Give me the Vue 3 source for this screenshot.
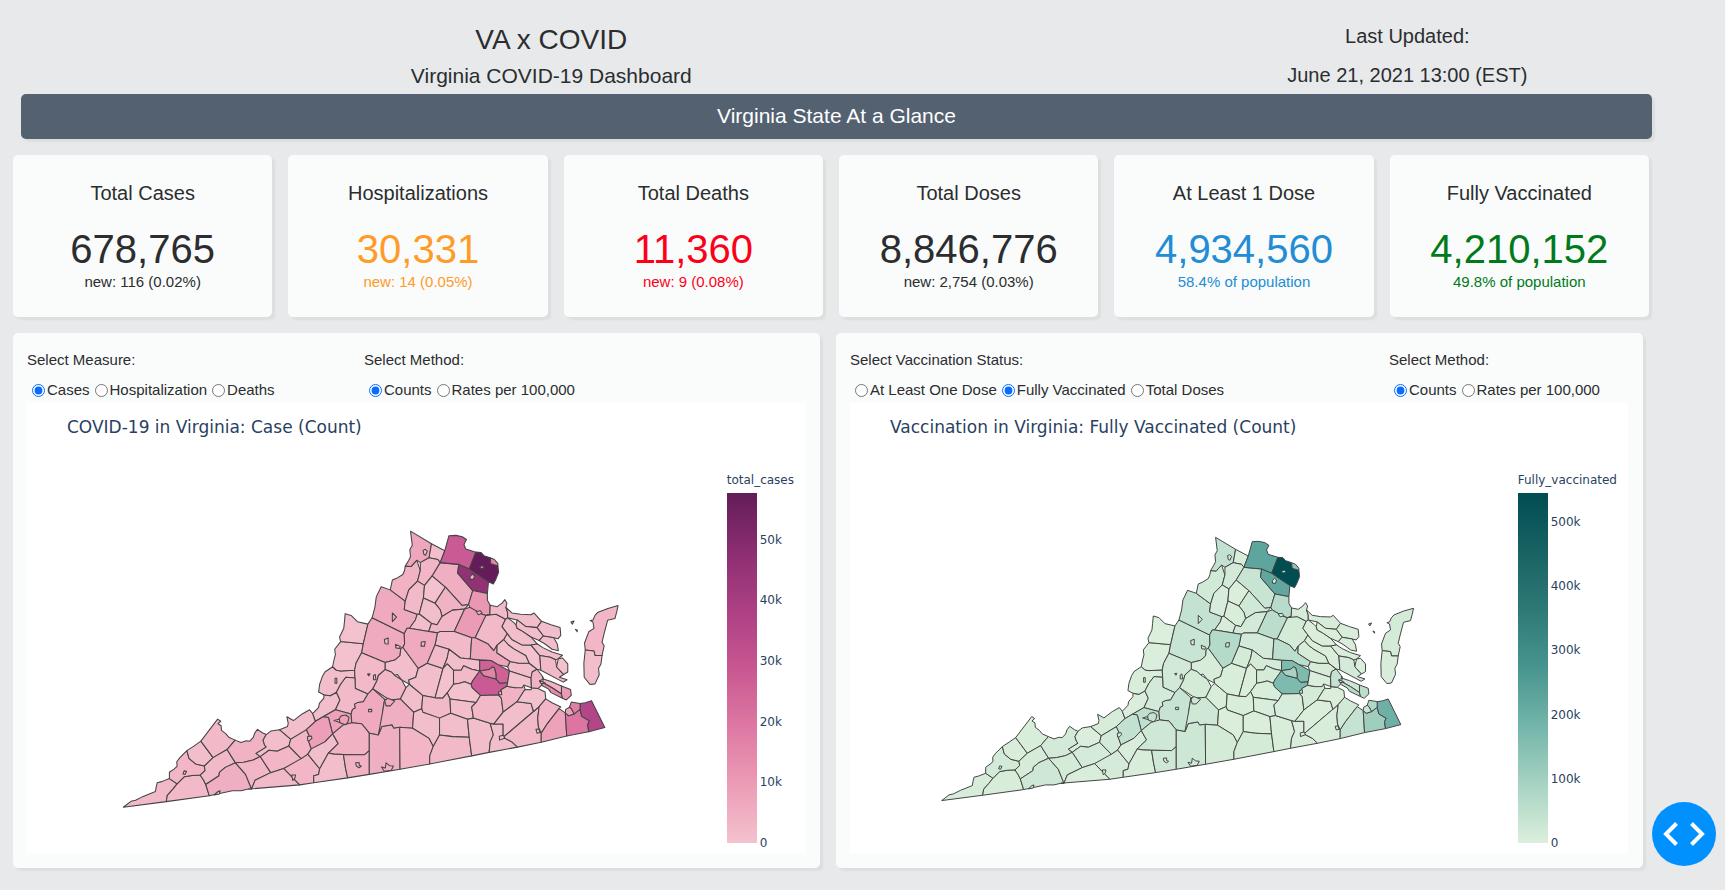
<script setup>
import { ref } from 'vue'

const stats = [
  { label: 'Total Cases', value: '678,765', note: 'new: 116 (0.02%)', tone: 'dark' },
  { label: 'Hospitalizations', value: '30,331', note: 'new: 14 (0.05%)', tone: 'orange' },
  { label: 'Total Deaths', value: '11,360', note: 'new: 9 (0.08%)', tone: 'red' },
  { label: 'Total Doses', value: '8,846,776', note: 'new: 2,754 (0.03%)', tone: 'dark' },
  { label: 'At Least 1 Dose', value: '4,934,560', note: '58.4% of population', tone: 'blue' },
  { label: 'Fully Vaccinated', value: '4,210,152', note: '49.8% of population', tone: 'green' }
]

const measure = ref('Cases')
const caseMethod = ref('Counts')
const status = ref('Fully Vaccinated')
const vaccineMethod = ref('Counts')

// name | cases (thousands) | fully vaccinated (thousands) | outline
const countyRows = `
Lee|2|8|38,842 60,825 73,822 95,811 130,797 132,785 135,772 150,768 170,760 192,775 180,790 164,808 161,826
Scott|2|8|161,826 164,808 180,790 192,775 212,755 235,751 258,750 268,765 274,777 284,809
Wise|3|15|170,760 170,742 183,733 192,725 191,712 200,700 220,680 226,702 245,718 270,724 272,737 258,750 235,751 212,755 192,775
Dickenson|1|5|220,680 240,667 260,653 295,700 270,724 245,718 226,702
Buchanan|2|7|260,653 308,590 317,596 309,603 318,609 319,622 332,632 340,642 358,650 335,677 295,700
Russell|2|10|270,724 295,700 335,677 359,715 330,728 313,742 312,752 274,777 258,750 272,737
Tazewell|4|17|358,650 375,657 390,652 400,653 410,642 414,630 422,619 436,629 447,634 438,650 442,663 447,670 418,688 430,697 410,707 383,713 359,715 335,677
Washington|5|24|274,777 312,752 313,742 330,728 359,715 388,748 405,790 396,790 375,795 350,795 348,800 284,809
Smyth|3|13|359,715 383,713 410,707 430,697 460,743 415,765 405,790 388,748
Bland|1|3|447,634 460,624 485,620 517,647 512,667 478,682 455,679 432,699 430,697 418,688 447,670 442,663 438,650
Wythe|3|12|432,699 455,679 478,682 512,667 547,703 524,723 497,731 460,743
Grayson|2|7|405,790 415,765 460,743 497,731 543,778 396,794
Carroll|3|12|497,731 547,703 566,690 600,732 597,748 583,752 583,772 543,778
Pulaski|3|15|512,667 517,647 562,620 570,637 569,655 576,675 566,690 547,703
Giles|1|8|485,620 508,611 510,602 506,583 525,594 550,575 571,563 580,574 588,596 562,620 517,647
Craig|1|2|588,596 580,574 597,556 599,545 612,530 612,520 630,523 648,513 658,535 645,563 610,583
Alleghany|1|7|612,523 597,512 600,490 608,467 615,455 637,440 648,450 660,452 700,450 701,472 675,470 660,490 648,513 630,523
Bath|0|2|637,440 641,420 645,405 643,390 660,368 725,374 720,400 704,430 700,450 660,452 648,450
Highland|0|1|660,368 657,355 669,330 671,310 673,288 690,293 708,311 738,318 725,374
Augusta|6|35|738,318 750,300 842,345 843,375 832,388 830,408 815,421 787,428 725,398 725,374
Rockingham|6|42|750,300 758,270 762,240 776,211 845,252 842,276 879,290 874,306 857,330 842,345
Shenandoah|4|19|802,220 808,192 820,187 838,176 843,164 845,152 862,153 878,135 888,165 880,195 855,220 845,252
Frederick|7|44|860,52 920,88 913,128 888,142 878,135 862,153 843,152 855,135 860,125 858,105 865,92
Clarke|1|7|920,88 958,108 945,142 938,133 913,128
Warren|3|16|888,142 913,128 938,133 945,142 922,180 900,207 880,195 888,165
Page|2|9|855,220 880,195 900,207 897,243 885,289 842,276 848,250
Rappahannock|0|4|900,207 922,180 960,212 930,258 897,243
Fauquier|5|34|945,142 998,147 995,172 1038,222 1026,262 1008,265 960,212 922,180
Loudoun|28|225|970,65 990,64 1008,68 1020,76 1013,90 1018,103 1047,112 1028,160 998,147 945,142 958,108
Fairfax|58|545|1047,112 1062,113 1070,122 1088,128 1090,145 1110,151 1112,170 1104,190 1097,203 1060,182 1028,160
Arlington|15|130|1088,128 1100,133 1110,145 1110,151 1090,145
Prince William|46|220|998,147 1028,160 1060,182 1083,197 1080,230 1038,220 995,172
Stafford|11|62|1038,220 1080,230 1080,250 1088,264 1087,290 1065,290 1030,270 1024,258
Culpeper|4|20|960,212 1008,265 1026,262 1015,275 980,278 950,296 945,277 930,258
Madison|1|6|897,243 930,258 945,277 950,296 936,320 920,316 885,289
Greene|1|8|885,289 920,316 912,339 857,330 874,306
Orange|3|16|920,316 936,320 950,296 980,278 1017,275 985,339 945,339 912,343
Spotsylvania|10|58|1017,275 1030,270 1065,290 1076,293 1045,357 985,339
Caroline|2|13|1076,293 1105,290 1132,304 1122,325 1137,345 1127,362 1108,378 1098,394 1082,375 1045,357
King George|2|11|1087,268 1108,268 1122,258 1130,248 1136,258 1133,270 1138,285 1132,304 1105,290 1076,293 1087,290
Louisa|2|16|937,343 945,339 985,339 1035,357 1031,418 1003,415 970,390 930,378
Hanover|7|55|1035,357 1082,375 1098,394 1108,378 1107,400 1145,425 1138,440 1090,422 1058,421 1031,418
Albemarle|6|68|842,345 850,330 857,330 912,339 937,343 930,378 908,430 882,445 838,385 843,375
Nelson|1|8|838,385 882,445 875,470 855,478 857,490 835,478 822,462 805,455 787,448 787,428 815,421 830,408
Rockbridge|2|18|725,398 787,428 790,452 768,465 764,480 752,503 738,518 702,502 700,450 704,430
Amherst|3|13|787,452 805,455 815,465 835,478 847,500 831,532 800,535 752,503 764,480 768,460
Botetourt|2|17|675,470 701,472 702,502 738,518 725,540 700,547 690,575 645,563 658,535 648,513 660,490
Roanoke|8|50|610,583 645,563 690,575 692,600 680,610 667,607 637,632 625,585
Montgomery|9|45|562,620 588,596 610,583 625,585 637,632 615,655 576,675 569,655 570,637
Floyd|1|6|576,675 615,655 637,632 653,660 625,687 600,732 566,690
Bedford|6|36|690,575 694,562 702,558 700,547 710,542 725,540 752,503 786,533 780,570 768,635 742,630 720,603 690,597
Franklin|4|22|637,632 667,607 690,600 720,603 742,630 742,680 728,692 668,691 640,690 625,687 653,660
Patrick|1|7|600,732 625,687 640,690 668,691 674,730 680,758 583,772 583,752 597,748
Henry|4|22|668,691 728,692 742,680 742,748 680,758 674,730
Pittsylvania|5|26|742,630 768,635 778,611 807,606 812,615 829,613 830,733 742,748
Campbell|5|22|786,533 800,535 831,532 869,570 866,616 829,613 812,615 807,606 778,611 768,635 780,570
Appomattox|1|6|831,532 847,500 857,490 895,522 892,560 869,570
Buckingham|1|5|855,478 875,470 882,445 908,430 953,445 930,529 895,522 857,490
Fluvanna|2|13|908,430 930,378 970,390 965,415 953,445
Goochland|1|13|970,390 1003,415 1058,421 1058,452 1035,447 1012,437 1005,450 983,450 965,432 953,445 965,415
Cumberland|0|3|953,445 965,432 983,450 983,490 965,515 952,530 930,529
Powhatan|2|14|983,450 1005,450 1012,437 1035,447 1058,455 1038,480 1033,490 1015,483 1000,487 983,495
Chesterfield|28|165|1058,455 1070,466 1105,475 1115,487 1138,485 1136,496 1120,505 1112,521 1060,522 1036,500 1033,490 1045,470
Henrico|26|165|1058,421 1090,422 1110,434 1143,452 1138,485 1118,483 1104,470 1100,443 1085,448 1058,455
Richmond City|16|90|1058,455 1085,450 1094,441 1104,458 1105,475 1070,466
Amelia|0|5|983,490 1000,487 1015,483 1033,490 1036,500 1060,522 1048,542 973,532 965,515
Prince Edward|2|7|895,522 930,529 952,530 965,515 973,532 975,573 943,587 895,570 892,560
Nottoway|1|5|973,532 1048,542 1035,555 1040,587 1023,590 975,573
Charlotte|1|4|869,570 892,560 895,570 943,587 943,635 925,668 913,645 866,616
Halifax|3|14|829,613 866,616 913,645 925,668 915,695 915,718 830,733
Lunenburg|1|4|943,587 975,573 1023,590 1028,642 980,640 943,633
Mecklenburg|2|13|943,633 980,640 1028,642 1035,695 915,718 915,695 925,668
Brunswick|1|5|1023,590 1040,587 1088,602 1097,635 1088,655 1085,685 1035,695 1028,642
Greensville|1|5|1088,602 1125,604 1125,642 1150,655 1166,670 1085,685 1088,655 1097,635
Dinwiddie|2|9|1060,522 1112,521 1120,530 1125,570 1098,604 1088,602 1040,587 1035,555 1048,542
Prince George|4|13|1112,521 1120,505 1136,496 1160,500 1184,492 1188,505 1165,540 1125,570
Sussex|1|4|1098,604 1125,570 1168,540 1205,545 1212,568 1125,642 1125,604
Southampton|2|6|1125,642 1212,568 1228,554 1224,587 1226,612 1234,630 1234,656 1166,670 1150,655
Surry|0|3|1165,540 1184,510 1188,500 1205,506 1225,502 1245,512 1247,532 1228,554 1212,568 1205,545
Isle of Wight|3|18|1228,554 1247,532 1265,543 1290,555 1250,605 1232,625 1224,587
Suffolk|8|38|1234,656 1234,625 1285,560 1303,572 1307,638
Chesapeake|20|105|1303,572 1312,580 1328,575 1345,562 1350,582 1372,595 1370,626 1307,638
Virginia Beach|36|195|1345,545 1360,543 1378,537 1416,614 1370,626 1367,605 1372,595 1350,582 1345,562
Norfolk|17|75|1320,541 1345,545 1345,562 1328,575 1320,560
Portsmouth|8|34|1304,562 1315,556 1328,575 1312,580 1303,572
New Kent|1|11|1143,452 1138,440 1145,425 1170,430 1200,430 1222,447 1208,455 1205,472 1143,456
Charles City|0|4|1143,456 1205,472 1206,500 1184,492 1180,500 1138,497 1138,485
James City|4|42|1205,472 1208,455 1222,447 1240,475 1230,480 1235,493 1220,500 1206,500
York|4|30|1238,468 1262,482 1292,495 1292,518 1265,500 1238,485
Newport News|14|62|1238,485 1265,500 1292,518 1295,530 1262,514 1255,504 1238,497
Hampton|10|55|1292,495 1318,505 1320,522 1306,535 1295,530 1292,518
King William|1|8|1108,378 1127,362 1140,377 1155,388 1190,408 1205,430 1222,447 1200,430 1170,430 1145,425 1107,400
King and Queen|0|3|1127,362 1137,345 1150,362 1180,378 1205,378 1230,408 1233,450 1222,447 1205,430 1190,408 1155,388 1140,377
Essex|1|4|1122,325 1132,304 1155,313 1165,330 1205,355 1223,375 1205,378 1180,378 1150,362 1137,345
Westmoreland|1|8|1138,272 1150,286 1175,290 1205,291 1213,286 1235,310 1222,328 1190,325 1165,306 1138,300
Northumberland|1|7|1235,310 1262,320 1288,328 1290,350 1282,360 1270,357 1240,352 1222,328
Richmond County|1|4|1165,306 1190,325 1222,328 1240,352 1228,365 1205,355 1180,338 1162,320
Lancaster|1|6|1228,365 1240,352 1270,357 1280,375 1283,394 1265,390 1245,375
Middlesex|1|5|1205,378 1223,372 1240,386 1265,398 1295,407 1283,417 1260,413 1233,410
Gloucester|2|16|1233,410 1260,413 1275,420 1278,440 1298,462 1286,470 1308,477 1297,484 1233,450
Mathews|0|4|1278,420 1295,415 1310,432 1310,455 1298,460 1282,445
Accomack|3|14|1454,265 1450,283 1445,302 1424,307 1414,345 1408,370 1414,380 1408,408 1388,408 1385,395 1360,392 1358,372 1370,340 1385,330 1382,312 1374,308 1382,306 1388,293 1395,285 1425,273
Northampton|1|6|1360,392 1385,395 1388,408 1408,408 1405,432 1398,445 1400,463 1388,489 1374,491 1357,470 1356,430
`

// Small independent cities drawn on top of the county that surrounds them.
const cityRows = `
Winchester|2|10|896,107 902,104 908,109 903,121 898,118
Harrisonburg|6|18|808,286 820,298 808,311
Staunton|2|10|785,362 796,358 796,375 787,374
Waynesboro|2|8|817,376 831,382 828,388 818,386
Charlottesville|4|20|891,369 902,368 900,381 890,381
Covington|0|2|644,473 649,473 649,487 644,487
Lexington|1|2|737,461 744,460 741,466
Buena Vista|1|2|754,465 759,462 761,477 754,477
Lynchburg|6|30|786,537 795,530 815,538 802,552 790,552
Bedford City|0|3|740,562 749,562 749,569 740,569
Salem|2|10|641,594 656,590 660,600
Roanoke City|8|38|656,588 662,580 675,578 684,585 681,598 674,606 658,600
Radford|2|5|565,640 576,638 578,644 571,651 566,652
Galax|1|2|520,750 531,750 529,759 523,765
Bristol|1|6|298,807 309,797 315,795 313,804
Norton|0|1|209,747 212,738 219,739 215,748
Martinsville|1|5|703,715 713,714 713,722 719,724 713,729 705,724
Danville|4|16|777,727 788,730 790,715 800,723 811,724 805,736 785,739
Emporia|1|2|1114,639 1125,636 1130,644 1115,650
Franklin City|1|3|1219,619 1227,618 1231,628 1222,630
Fredericksburg|2|9|1048,282 1060,280 1065,287 1054,291
Manassas|4|20|1030,182 1037,175 1043,180 1040,190 1031,190
Fairfax City|1|10|1058,154 1066,151 1071,156 1063,159
Hopewell|2|8|1111,513 1120,509 1121,520 1114,520
Williamsburg|1|5|1229,480 1236,482 1246,487 1233,488
Tangier|1|2|1319,312 1328,309 1323,318
Watts|1|2|1332,333 1337,335 1337,340
`

function parse(rows) {
  return rows.trim().split('\n').map((row) => {
    const [name, cases, vaccinated, outline] = row.split('|')
    return {
      name,
      cases: Number(cases),
      vaccinated: Number(vaccinated),
      points: outline.split(' ').map((pair) => pair.split(',').map(Number))
    }
  })
}

// Merge corners that nearly coincide and stitch corners onto neighbouring edges,
// so counties share one common border.
const SNAP = 6
function stitch(regions) {
  const corners = []
  const merged = regions.map((region) => ({
    ...region,
    points: region.points.map((point) => {
      const hit = corners.find((c) => Math.hypot(c[0] - point[0], c[1] - point[1]) < SNAP)
      if (hit) return hit
      corners.push(point)
      return point
    })
  }))
  return merged.map((region) => {
    const points = []
    region.points.forEach((a, i) => {
      const b = region.points[(i + 1) % region.points.length]
      points.push(a)
      const dx = b[0] - a[0]
      const dy = b[1] - a[1]
      const length = Math.hypot(dx, dy)
      if (!length) return
      corners
        .filter((c) => !region.points.includes(c))
        .map((c) => ({
          c,
          along: ((c[0] - a[0]) * dx + (c[1] - a[1]) * dy) / length,
          off: Math.abs((c[0] - a[0]) * dy - (c[1] - a[1]) * dx) / length
        }))
        .filter((item) => item.off < SNAP && item.along > 2 && item.along < length - 2)
        .sort((m, n) => m.along - n.along)
        .forEach((item) => points.push(item.c))
    })
    return { ...region, points }
  })
}

const regions = [...stitch(parse(countyRows)), ...parse(cityRows)].map((region) => ({
  ...region,
  outline: region.points.map((p) => p.join(',')).join(' ')
}))

const magenta = [[244, 194, 206], [236, 156, 182], [222, 120, 163], [200, 87, 145], [172, 64, 131], [139, 46, 113], [99, 28, 89]]
const teal = [[220, 239, 220], [167, 211, 195], [115, 181, 170], [72, 149, 143], [46, 121, 118], [25, 98, 99], [0, 77, 82]]

function shade(stops, share) {
  const place = Math.min(1, share) * (stops.length - 1)
  const low = Math.min(stops.length - 2, Math.floor(place))
  const mix = stops[low].map((v, i) => Math.round(v + (stops[low + 1][i] - v) * (place - low)))
  return `rgb(${mix.join(',')})`
}

const panels = [
  {
    id: 'cases',
    first: { legend: 'Select Measure:', name: 'measure', options: ['Cases', 'Hospitalization', 'Deaths'], model: measure },
    second: { legend: 'Select Method:', name: 'case-method', options: ['Counts', 'Rates per 100,000'], model: caseMethod },
    title: 'COVID-19 in Virginia: Case (Count)',
    scaleTitle: 'total_cases',
    field: 'cases',
    stops: magenta,
    max: 57.7,
    ticks: [0, 10, 20, 30, 40, 50]
  },
  {
    id: 'vaccines',
    first: { legend: 'Select Vaccination Status:', name: 'status', options: ['At Least One Dose', 'Fully Vaccinated', 'Total Doses'], model: status },
    second: { legend: 'Select Method:', name: 'vaccine-method', options: ['Counts', 'Rates per 100,000'], model: vaccineMethod },
    title: 'Vaccination in Virginia: Fully Vaccinated (Count)',
    scaleTitle: 'Fully_vaccinated',
    field: 'vaccinated',
    stops: teal,
    max: 545,
    ticks: [0, 100, 200, 300, 400, 500]
  }
]
</script>

<template>
  <main class="page">
    <header class="header">
      <div class="heading">
        <h1>VA x COVID</h1>
        <h2>Virginia COVID-19 Dashboard</h2>
      </div>
      <div class="updated">
        <p>Last Updated:</p>
        <p>June 21, 2021 13:00 (EST)</p>
      </div>
    </header>

    <h2 class="banner">Virginia State At a Glance</h2>

    <section class="stats">
      <article v-for="stat in stats" :key="stat.label" class="card">
        <h3>{{ stat.label }}</h3>
        <p class="value" :class="stat.tone">{{ stat.value }}</p>
        <p class="note" :class="stat.tone">{{ stat.note }}</p>
      </article>
    </section>

    <section class="panels">
      <article v-for="panel in panels" :key="panel.id" class="panel">
        <div class="controls" :class="panel.id">
          <fieldset v-for="group in [panel.first, panel.second]" :key="group.name">
            <legend>{{ group.legend }}</legend>
            <div class="options">
              <label v-for="option in group.options" :key="option">
                <input
                  type="radio"
                  :name="group.name"
                  :value="option"
                  :checked="group.model.value === option"
                  @change="group.model.value = option"
                />
                <span>{{ option }}</span>
              </label>
            </div>
          </fieldset>
        </div>

        <div class="chart">
          <h3>{{ panel.title }}</h3>
          <div class="plot">
            <div class="map">
              <svg viewBox="0 0 1500 870" role="img" :aria-label="panel.title">
                <polygon
                  v-for="region in regions"
                  :key="region.name"
                  :points="region.outline"
                  :fill="shade(panel.stops, region[panel.field] / panel.max)"
                />
              </svg>
            </div>
            <div class="scale">
              <p>{{ panel.scaleTitle }}</p>
              <div class="bar" :class="panel.id">
                <span
                  v-for="tick in panel.ticks"
                  :key="tick"
                  :style="{ bottom: (tick / panel.max) * 100 + '%' }"
                >{{ tick ? tick + 'k' : '0' }}</span>
              </div>
            </div>
          </div>
        </div>
      </article>
    </section>

    <button class="debug" type="button" aria-label="Toggle developer tools">
      <svg viewBox="0 0 64 64" aria-hidden="true">
        <path d="M24.500 21.500 L14 32 L24.500 42.500 M39.500 21.500 L50 32 L39.500 42.500" />
      </svg>
    </button>
  </main>
</template>

<style>
body {
  background: #e8e9eb;
}
</style>

<style scoped>
.page {
  box-sizing: border-box;
  min-height: 100vh;
  padding: 20px 73px 22px 13px;
  color: #2b2d2f;
  background: #e8e9eb;
  font-family: "Liberation Sans", Arial, sans-serif;
}
h1,
h2,
h3,
p {
  margin: 0;
  font-weight: 400;
}
.header {
  display: grid;
  grid-template-columns: 11fr 5fr;
  gap: 73px;
  height: 74px;
  text-align: center;
}
h1 {
  font-size: 28px;
  line-height: 40px;
}
h2 {
  font-size: 21px;
  line-height: 32px;
}
.updated p {
  font-size: 20px;
  line-height: 32px;
}
.updated p + p {
  margin-top: 7px;
}
.banner {
  margin-left: 8px;
  padding: 6px 0 7px;
  border-radius: 5px;
  color: #fff;
  background: #536171;
  box-shadow: 3px 3px 2px #dddede;
  text-align: center;
}
.stats {
  display: grid;
  grid-template-columns: repeat(6, 1fr);
  gap: 16px;
  margin: 16px 3px 0 0;
}
.card {
  padding: 26px 0 24px;
  border-radius: 5px;
  background: #fafcfb;
  box-shadow: 3px 3px 2px #dddede;
  text-align: center;
}
.card h3 {
  font-size: 20px;
  line-height: 24px;
}
.value {
  margin-top: 22px;
  font-size: 40px;
  line-height: 44px;
}
.note {
  font-size: 15px;
  line-height: 22px;
}
.orange {
  color: #fe9b29;
}
.red {
  color: #fc0019;
}
.blue {
  color: #228cd5;
}
.green {
  color: #017a1c;
}
.panels {
  display: grid;
  grid-template-columns: 1fr 1fr;
  gap: 16px;
  margin: 16px 9px 0 0;
}
.panel {
  padding: 16px 15px 15px 14px;
  border-radius: 5px;
  background: #fafcfb;
  box-shadow: 3px 3px 2px #dddede;
}
.controls {
  display: grid;
  grid-template-columns: 337fr 441fr;
  font-size: 15px;
}
.controls.vaccines {
  grid-template-columns: 539fr 239fr;
}
fieldset {
  min-width: 0;
  margin: 0;
  padding: 0;
  border: 0;
}
legend {
  padding: 0;
  line-height: 22px;
}
.options {
  display: flex;
  padding: 6px 0 0;
  line-height: 26px;
}
label {
  display: flex;
  align-items: center;
  white-space: nowrap;
}
input {
  width: 13px;
  height: 13px;
  margin: 0 2px 0 5px;
  accent-color: #0a6cff;
}
.chart {
  color: #2a3f5f;
  background: #fff;
  font-family: "DejaVu Sans", Verdana, sans-serif;
}
.chart h3 {
  padding: 14px 0 36px 40px;
  font-size: 17px;
  line-height: 20px;
}
.plot {
  display: flex;
  gap: 10px;
  padding-right: 11px;
}
.map {
  display: flex;
  flex: 1;
  align-items: center;
  justify-content: center;
  padding-top: 4px;
}
.map svg {
  width: 76%;
}
.map polygon {
  stroke: #444;
  stroke-width: 3;
  stroke-linejoin: round;
}
.scale {
  padding-bottom: 10px;
  font-size: 12px;
  line-height: 14px;
}
.bar {
  position: relative;
  width: 30px;
  height: 350px;
  margin-top: 6px;
}
.bar.cases {
  background: linear-gradient(to top, #f4c2ce, #ec9cb6, #de78a3, #c85791, #ac4083, #8b2e71, #631c59);
}
.bar.vaccines {
  background: linear-gradient(to top, #dcefdc, #a7d3c3, #73b5aa, #48958f, #2e7976, #196263, #004d52);
}
.bar span {
  position: absolute;
  left: 33px;
  margin-bottom: -7px;
}
.debug {
  position: fixed;
  right: 9px;
  bottom: 24px;
  width: 64px;
  height: 64px;
  padding: 0;
  border: 0;
  border-radius: 50%;
  background: #0091ff;
}
.debug svg {
  display: block;
  fill: none;
  stroke: #fff;
  stroke-width: 4;
}
</style>
